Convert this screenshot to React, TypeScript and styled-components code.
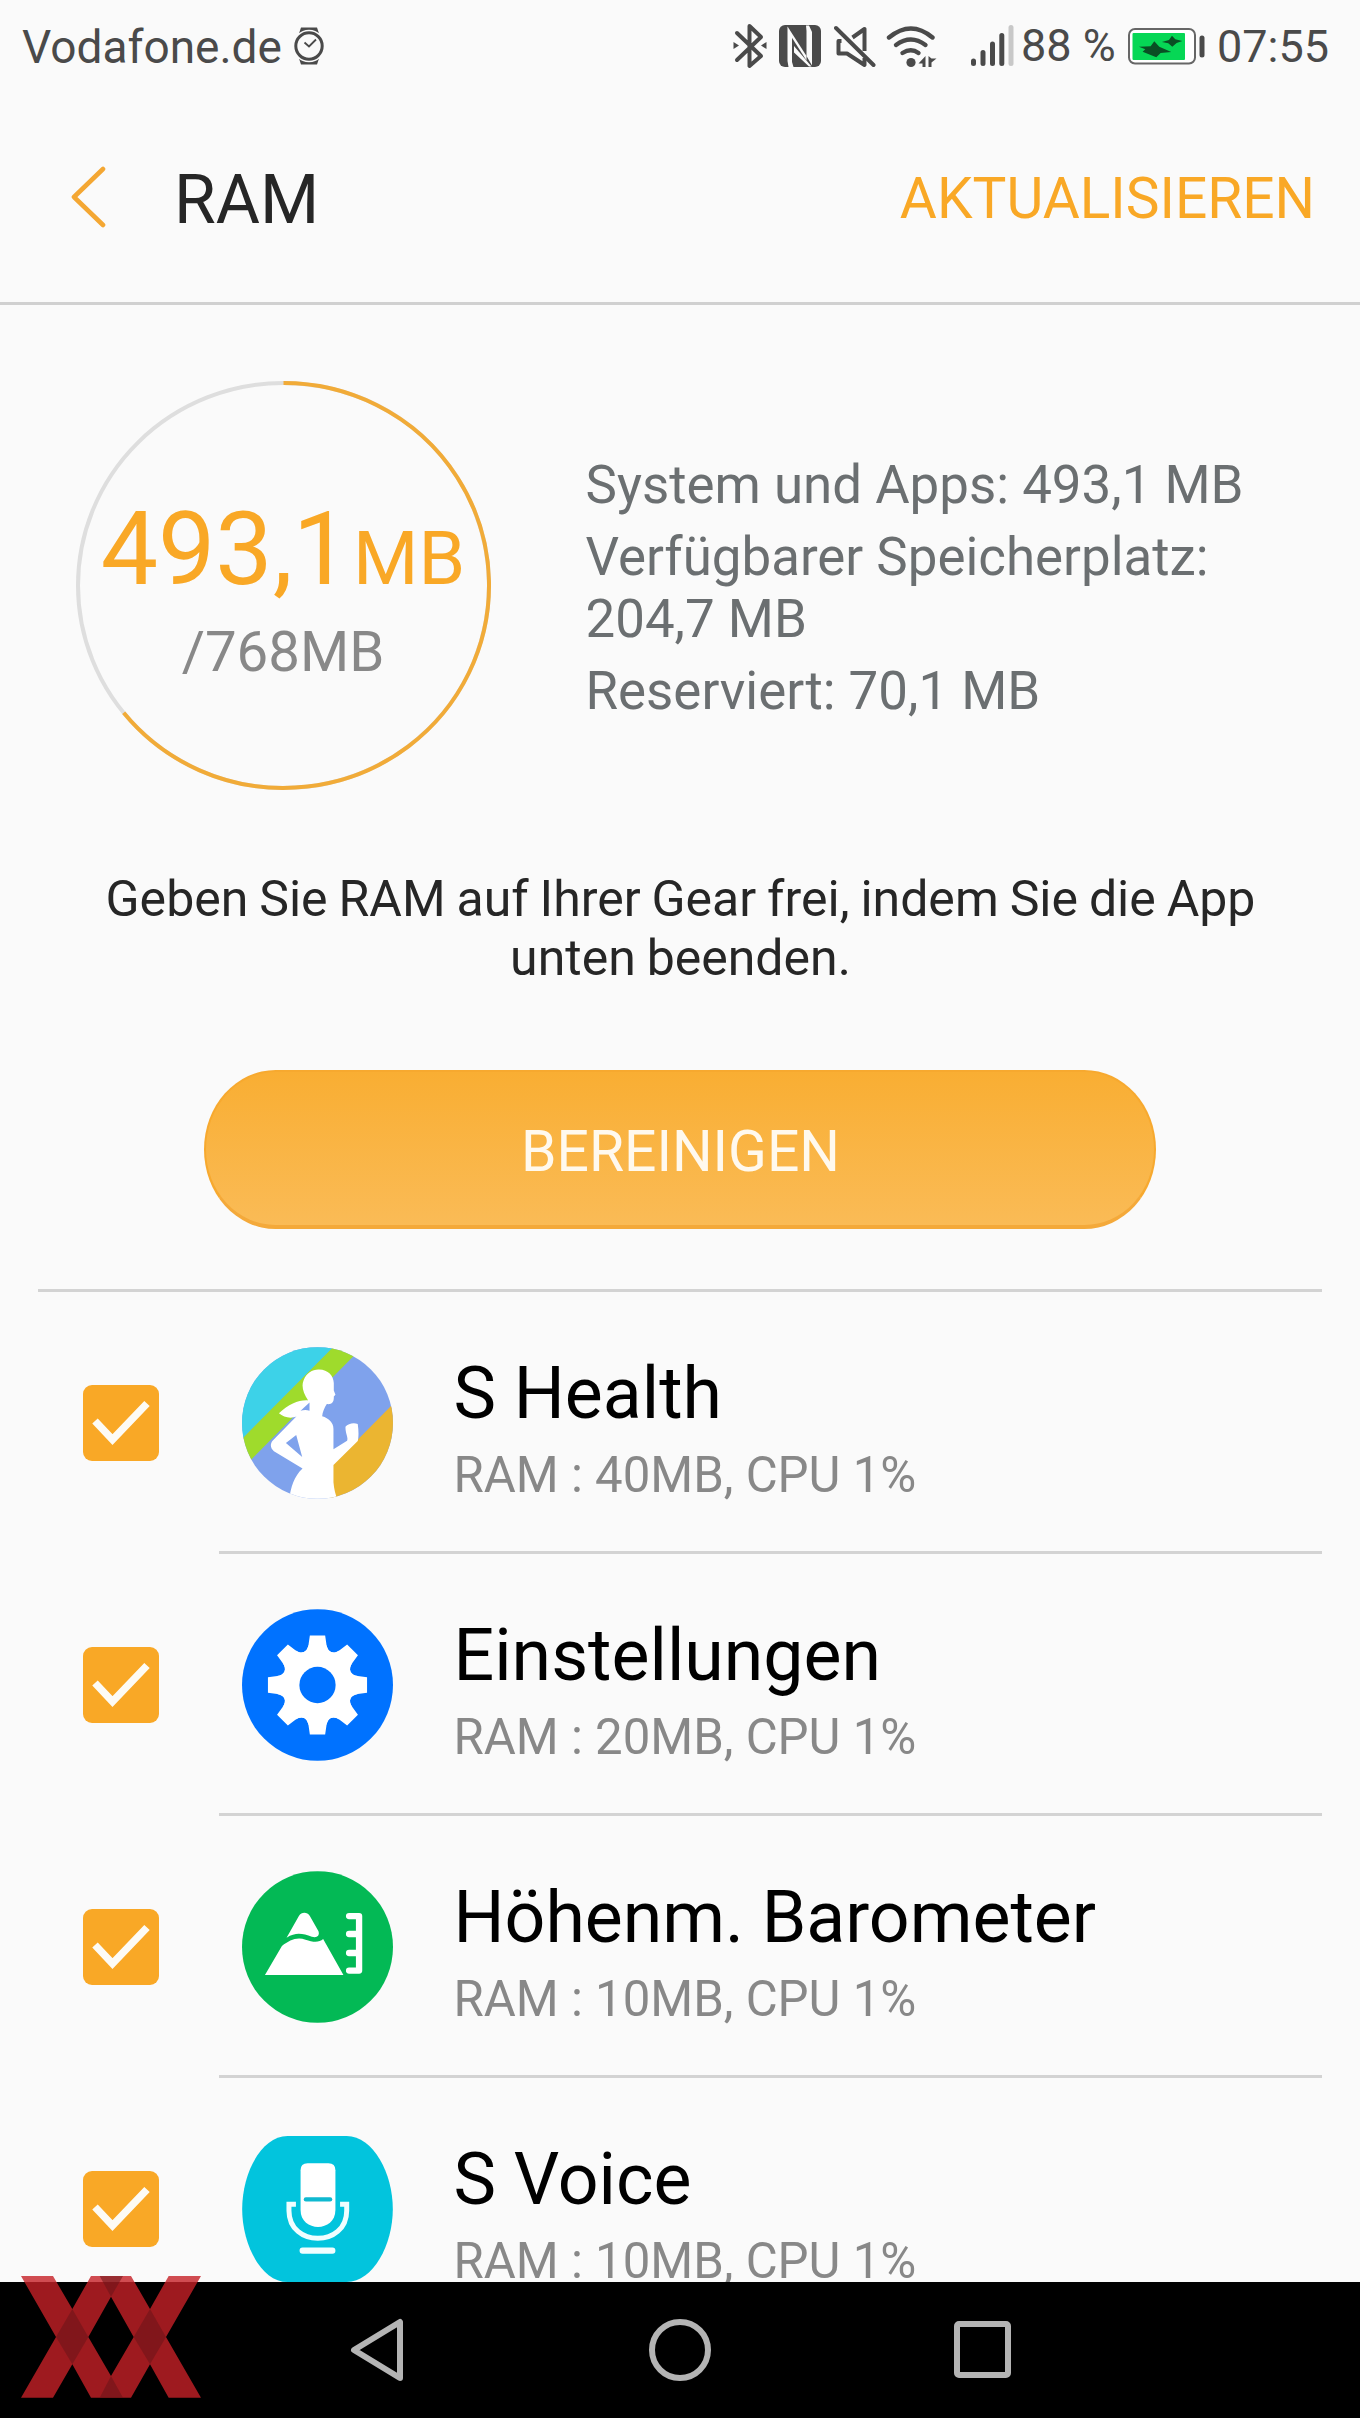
import React from "react";
import styled, { createGlobalStyle } from "styled-components";

const ORANGE = "#f9a826";
const INK = "#4a4a4a";

const GlobalStyle = createGlobalStyle`
  * { box-sizing: border-box; }
  html, body { margin: 0; padding: 0; background: #fafafa; }
  body { font-family: Roboto, "Noto Sans", sans-serif; }
  h1, h2, p, ul { margin: 0; padding: 0; font-weight: 400; }
  svg { display: block; flex: none; }
`;

const Screen = styled.div`
  position: relative;
  display: flex;
  flex-direction: column;
  width: 1360px;
  height: 2418px;
  overflow: hidden;
  background: #fafafa;
`;

const StatusBar = styled.div`
  display: flex;
  align-items: center;
  height: 92px;
  padding: 0 31px 0 22px;
  color: ${INK};
`;

const StatusText = styled.span<{ $size?: number; $drop?: number }>`
  font-size: ${(p) => p.$size ?? 45}px;
  line-height: 52px;
  padding-top: ${(p) => p.$drop ?? 0}px;
  white-space: nowrap;
`;

const StatusIcons = styled.div`
  display: flex;
  align-items: center;
  margin-left: auto;
`;

const Slot = styled.div<{ $w: number }>`
  display: flex;
  flex: none;
  width: ${(p) => p.$w}px;
`;

const Header = styled.header`
  display: flex;
  align-items: center;
  height: 213px;
  padding: 0 45px 0 69px;
  border-bottom: 3px solid #d0d0d0;
`;

const BackButton = styled.button`
  width: 105px;
  padding: 0;
  border: 0;
  background: none;
`;

const Title = styled.h1`
  padding-top: 6px;
  color: #262626;
  font-size: 67.8px;
  line-height: 80px;
`;

const HeaderAction = styled.button`
  margin-left: auto;
  padding: 4px 0 0;
  border: 0;
  background: none;
  color: ${ORANGE};
  font: 400 56.8px/68px Roboto, sans-serif;
`;

const Summary = styled.section`
  display: flex;
  align-items: flex-start;
  height: 565px;
  padding: 76px 0 0 76px;
`;

const Gauge = styled.div`
  display: grid;
  flex: none;
  width: 416px;
  height: 410px;

  > * { grid-area: 1 / 1; }
`;

const GaugeLabel = styled.div`
  display: flex;
  flex-direction: column;
  align-items: center;
  padding: 108px 2px 0 0;
`;

const Used = styled.div`
  height: 120px;
  color: ${ORANGE};
  font-size: 102px;
  line-height: 120px;
  white-space: nowrap;
`;

const Unit = styled.span`
  margin-left: 3px;
  font-size: 75px;
`;

const Total = styled.div`
  margin-top: 10px;
  color: #888;
  font-size: 56.4px;
  line-height: 66px;
`;

const Facts = styled.div`
  display: flex;
  flex-direction: column;
  gap: 10.5px;
  width: 700px;
  margin: 74px 0 0 93.5px;
  color: #6b6f71;
  font-size: 52.85px;
  line-height: 61.5px;
`;

const Hint = styled.p`
  height: 200px;
  padding: 0 60px 0 61px;
  color: #262626;
  font-size: 50px;
  line-height: 59px;
  text-align: center;
  word-spacing: -1.5px;
`;

const CleanButton = styled.button`
  align-self: center;
  flex: none;
  width: 952px;
  height: 159px;
  padding: 7px 0 0 1px;
  border: 2px solid #f7a92f;
  border-bottom: 4px solid #f4a93a;
  border-radius: 72px / 80px;
  background: linear-gradient(#f9ae33, #fabb56);
  color: #fff9ee;
  font: 400 57px/68px Roboto, sans-serif;
`;

const List = styled.ul`
  flex: 1;
  min-height: 0;
  margin: 60px 38px 0;
  border-top: 3px solid #d3d3d3;
  list-style: none;
  overflow: hidden;
`;

const Row = styled.li`
  display: flex;
  height: 262px;
`;

const CheckCell = styled.div`
  display: flex;
  align-items: center;
  width: 181px;
  padding-left: 45px;
`;

const CheckBox = styled.div`
  width: 76px;
  height: 76px;
  border-radius: 9px;
  background: ${ORANGE};
`;

const RowBody = styled.div`
  display: flex;
  flex: 1;
  align-items: center;
  gap: 60.5px;
  padding: 3px 0 0 23px;
  border-bottom: 3px solid #d3d3d3;
`;

const RowText = styled.div`
  padding-top: 18px;
  white-space: nowrap;
`;

const AppName = styled.h2`
  color: #000;
  font-size: 71.6px;
  line-height: 84px;
`;

const AppUsage = styled.p`
  margin: 20px 0 19px;
  color: #888;
  font-size: 49.15px;
  line-height: 38px;
`;

const NavBar = styled.nav`
  display: flex;
  flex: none;
  align-items: center;
  gap: 242px;
  height: 136px;
  padding: 0 0 0 350px;
  background: #000;
`;

const Watermark = styled.div`
  position: absolute;
  left: 20.700px;
  top: 2276px;
`;

const WatchIcon = () => (
  <svg width="30" height="38" viewBox="0 0 30 38" fill="none" stroke={INK}>
    <path d="M5 6.500 7 .5h16l2 6Z M5 31.500 7 37.500h16l2-6Z" fill={INK} stroke="none" />
    <circle cx="15" cy="19" r="15.500" stroke="#fafafa" strokeWidth="1.500" fill="#fafafa" />
    <circle cx="15" cy="19" r="13.200" strokeWidth="3" />
    <path d="m10.500 15.500 4.500 4 7-7" strokeWidth="1.800" />
  </svg>
);

const BluetoothIcon = () => (
  <svg width="34" height="46" viewBox="733 23 34 46">
    <path d="M737 33 761 56 749.500 66V26L761 37 737 60" fill="none" stroke={INK} strokeWidth="4" strokeLinecap="round" strokeLinejoin="round" />
    <path d="m733.500 42 5.500 3.500-5.500 3.500Zm33 0-5.500 3.500 5.500 3.500Z" fill={INK} />
  </svg>
);

const NfcIcon = () => (
  <svg width="42" height="42" viewBox="0 0 42 42">
    <rect width="42" height="42" rx="6" fill={INK} />
    <g fill="#fafafa">
      <path d="M8.500 1.500 13 10V37l1.500 5H9.500L8.500 36Z" />
      <path d="M8.500 1.500 27.500 31V35.500L12.500 12Z" />
      <path d="M27 .5H30L33 7V40.500L27.500 31V6Z" />
      <path d="M15 21 32.500 41.500H30L15 27.500Z" />
    </g>
  </svg>
);

const MuteIcon = () => (
  <svg width="42" height="43" viewBox="834 24 42 43" fill="none" stroke={INK} strokeWidth="4" strokeLinejoin="round">
    <path d="M852.500 36.500 864.500 28V50M841.500 40H838.500V52.500H847L864.500 64V57" />
    <path d="M836 27 873.500 64" strokeLinecap="round" />
  </svg>
);

const WifiIcon = () => (
  <svg width="51" height="43" viewBox="886 23 51 43">
    <g fill="none" stroke={INK} strokeWidth="4.400" strokeLinecap="round">
      <path d="M889 35.500Q911 17.500 932.500 35.500" />
      <path d="M896 43Q911 32 925.500 43" />
      <path d="M902.500 51Q911 45.500 918.500 51" />
    </g>
    <circle cx="911" cy="60.500" r="4.600" fill={INK} />
    <path d="M925.500 54V65H922.500V61.500H918.500Zm3 0v11h3v-4.500l5-4h-5Z" fill={INK} />
  </svg>
);

const SignalIcon = () => (
  <svg width="44" height="42" viewBox="970 24 44 42" strokeWidth="5" strokeLinecap="round" stroke={INK}>
    <path d="M973.500 60V62.500M983 51.500V62.500M992.500 43V62.500M1001.800 34.500V62.500" />
    <path d="M1011 26.500V62.500" stroke="#c8c8c8" />
  </svg>
);

const BatteryIcon = () => (
  <svg width="78" height="37" viewBox="1128 26 78 37">
    <rect x="1129" y="27" width="66" height="34.500" rx="6" fill="#fff" stroke="#666" strokeWidth="2" />
    <rect x="1132.500" y="31" width="52.500" height="27" rx="1" fill="#06d755" />
    <path
      transform="translate(720 10) scale(.3333)"
      d="M1257 104 1292 103 1303 88 1318 104 1354 120 1322 123 1309 136 1268 119 1276 112ZM1326 90 1347 84 1356 71 1366 82 1387 87 1370 93 1357 104 1345 94Z"
      fill="#0a4f24"
    />
    <rect x="1199.500" y="33.500" width="5" height="22" rx="2.500" fill={INK} />
  </svg>
);

const GaugeRing = () => (
  <svg width="416" height="410" viewBox="0 0 416 410" fill="none" strokeWidth="4">
    <ellipse cx="207.500" cy="204.500" rx="205.500" ry="202.500" stroke="#dedede" />
    <path d="M207.500 2A205.500 202.500 0 1 1 47.700 331.800" stroke="#f1ab38" />
  </svg>
);

const CheckMark = () => (
  <svg width="76" height="76" viewBox="0 0 76 76">
    <path d="M12 36 29.500 54.500 64 18.500" fill="none" stroke="#fdfbf5" strokeWidth="7.500" />
  </svg>
);

const HealthIcon = () => (
  <svg width="151" height="152" viewBox="605 80 454 456">
    <defs>
      <clipPath id="disc">
        <ellipse cx="832" cy="308" rx="227" ry="228" />
      </clipPath>
    </defs>
    <g clipPath="url(#disc)">
      <path d="M600 75h465v465H600Z" fill="#7fa2ec" />
      <path d="M600 75H884L605 356Z" fill="#3dd2e8" />
      <path d="M884 75H972L600 451V361Z" fill="#9fdb2c" />
      <path d="M1065 245V540H870V442Z" fill="#ebb531" />
      <path
        fill="#fff"
        d="M745 545C751 508 759 470 787 445L701 393C690 384 689 371 697 361L769 288C752 297 730 291 716 279C746 250 777 238 804 240C789 220 783 197 790 180C799 156 818 146 837 147C864 148 880 165 881 188L881 210L886 223L881 228C882 245 875 253 860 251C853 262 847 275 846 288C866 294 880 307 880 326V387L921 361C925 350 916 342 916 319C924 309 942 306 953 311C956 331 956 350 953 362L880 434V486C882 513 889 529 894 545Z"
      />
      <path d="M768 344 737 368 786 410ZM808 246 781 271Q796 267 808 271Z" fill="#7fa2ec" />
    </g>
  </svg>
);

const SettingsIcon = () => (
  <svg width="151" height="152" viewBox="-227 -228 454 456">
    <ellipse rx="227" ry="228" fill="#0072ff" />
    <g fill="#fff">
      {[0, 45, 90, 135, 180, 225, 270, 315].map((angle) => (
        <path
          key={angle}
          transform={`rotate(${angle})`}
          d="M-23-149H23L27-121C31-98 47.400-91.200 66.500-104.600L0 0-66.500-104.600C-47.400-91.200-31-98-27-121Z"
        />
      ))}
      <circle r="80" />
    </g>
    <circle r="54.500" fill="#0072ff" />
  </svg>
);

const BarometerIcon = () => (
  <svg width="151" height="152" viewBox="605 93 454 456">
    <ellipse cx="832" cy="321" rx="227" ry="228" fill="#03b955" />
    <path d="M739 293 776 228C784 215 801 215 809 228L835 274C840 290 827 294 815 290C788 281 768 275 739 293Z" fill="#fff" />
    <path d="M674 405 725 318C748 300 770 290 796 299C819 307 837 308 849 297L910 405Z" fill="#fff" />
    <path d="M927 228H957V392H927M927 282H957M927 339H957" fill="none" stroke="#fff" strokeWidth="19" strokeLinecap="round" strokeLinejoin="round" />
  </svg>
);

const VoiceIcon = () => (
  <svg width="151" height="146" viewBox="605 107 454 440">
    <path d="M742 107H920C1000 107 1059 220 1059 327S1000 547 920 547H742C662 547 605 434 605 327S662 107 742 107Z" fill="#02c4dd" />
    <path d="M802 189H865Q886 189 886 210V330C886 398 781 398 781 330V210Q781 189 802 189Z" fill="#fff" />
    <path d="M797 298H870" stroke="#0fb9d0" strokeWidth="13" strokeLinecap="round" />
    <path d="M767 313H746V332C746 443 920 443 920 332V313H900" fill="none" stroke="#f1feff" strokeWidth="15" />
    <rect x="778" y="443" width="108" height="19" rx="9" fill="#f1feff" />
  </svg>
);

const BrandMark = () => (
  <svg width="180" height="121.700" viewBox="62 48 540 365">
    <path
      d="M62 48H158L216 147 272 48H392L449 147 505 48H602L497 231 602 413H505L449 313 392 413H272L216 313 158 413H62L167 231ZM332 110 264 231 332 348 400 231Z"
      fill="#c52127"
      fillOpacity=".8"
      fillRule="evenodd"
    />
    <path
      d="M216 147 264 231 216 313 167 231ZM449 147 497 231 449 313 400 231ZM298 48H368L332 110ZM298 413H368L332 348Z"
      fill="#6a1418"
      fillOpacity=".55"
    />
  </svg>
);

const apps = [
  { name: "S Health", usage: "RAM : 40MB, CPU 1%", Icon: HealthIcon },
  { name: "Einstellungen", usage: "RAM : 20MB, CPU 1%", Icon: SettingsIcon },
  { name: "Höhenm. Barometer", usage: "RAM : 10MB, CPU 1%", Icon: BarometerIcon },
  { name: "S Voice", usage: "RAM : 10MB, CPU 1%", Icon: VoiceIcon },
];

export default function App() {
  return (
    <>
      <GlobalStyle />
      <Screen>
        <StatusBar>
          <StatusText $size={46} $drop={2}>Vodafone.de</StatusText>
          <Slot $w={12} />
          <WatchIcon />
          <StatusIcons>
            <BluetoothIcon />
            <Slot $w={12} />
            <NfcIcon />
            <Slot $w={13} />
            <MuteIcon />
            <Slot $w={10} />
            <WifiIcon />
            <Slot $w={33} />
            <SignalIcon />
            <Slot $w={7} />
            <Slot $w={107}>
              <StatusText>88 %</StatusText>
            </Slot>
            <BatteryIcon />
            <Slot $w={11} />
            <StatusText $drop={2}>07:55</StatusText>
          </StatusIcons>
        </StatusBar>

        <Header>
          <BackButton>
            <svg width="38" height="62" viewBox="0 0 38 62">
              <path d="M34 3 5 31 34 59" fill="none" stroke="#f4a733" strokeWidth="4.600" strokeLinecap="round" strokeLinejoin="round" />
            </svg>
          </BackButton>
          <Title>RAM</Title>
          <HeaderAction>AKTUALISIEREN</HeaderAction>
        </Header>

        <Summary>
          <Gauge>
            <GaugeRing />
            <GaugeLabel>
              <Used>
                493,1<Unit>MB</Unit>
              </Used>
              <Total>/768MB</Total>
            </GaugeLabel>
          </Gauge>
          <Facts>
            <p>System und Apps: 493,1 MB</p>
            <p>
              Verfügbarer Speicherplatz:
              <br />
              204,7 MB
            </p>
            <p>Reserviert: 70,1 MB</p>
          </Facts>
        </Summary>

        <Hint>
          Geben Sie RAM auf Ihrer Gear frei, indem Sie die App
          <br />
          unten beenden.
        </Hint>
        <CleanButton>BEREINIGEN</CleanButton>

        <List>
          {apps.map(({ name, usage, Icon }) => (
            <Row key={name}>
              <CheckCell>
                <CheckBox>
                  <CheckMark />
                </CheckBox>
              </CheckCell>
              <RowBody>
                <Icon />
                <RowText>
                  <AppName>{name}</AppName>
                  <AppUsage>{usage}</AppUsage>
                </RowText>
              </RowBody>
            </Row>
          ))}
        </List>

        <NavBar>
          <svg width="56" height="64" viewBox="0 0 56 64">
            <path d="M4 32 50 4V60Z" fill="none" stroke="#b4b4b4" strokeWidth="6" strokeLinejoin="round" />
          </svg>
          <svg width="64" height="64" viewBox="0 0 64 64">
            <circle cx="32" cy="32" r="28" fill="none" stroke="#b4b4b4" strokeWidth="6" />
          </svg>
          <svg width="58" height="58" viewBox="0 0 58 58">
            <rect x="3" y="3" width="51" height="51" rx="2" fill="none" stroke="#b4b4b4" strokeWidth="6" />
          </svg>
        </NavBar>

        <Watermark>
          <BrandMark />
        </Watermark>
      </Screen>
    </>
  );
}
